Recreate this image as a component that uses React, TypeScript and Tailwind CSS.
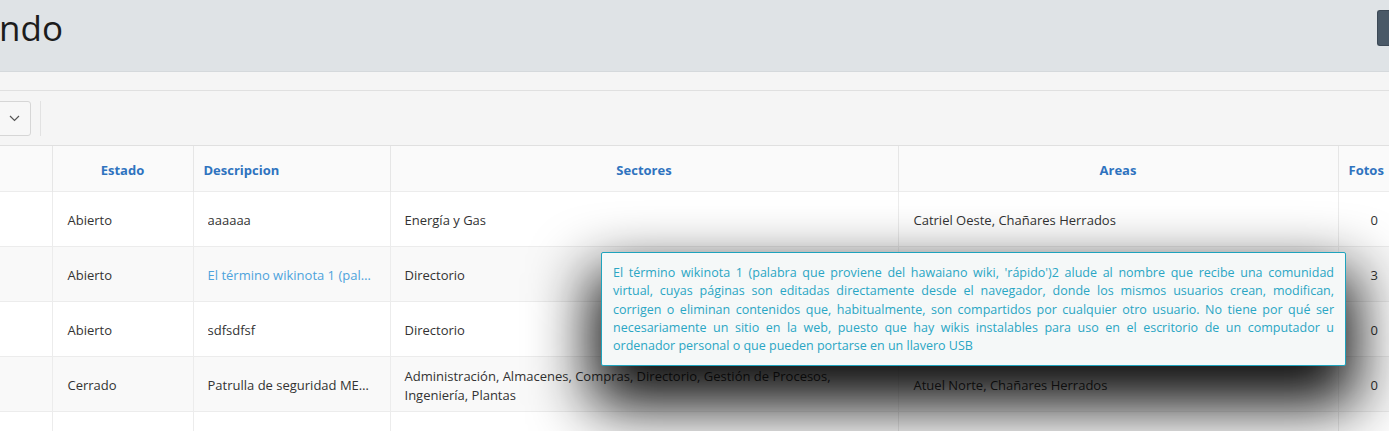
import React from "react";

type Row = {
  estado: string;
  descripcion: string;
  link?: boolean;
  sectores: string;
  areas: string;
  fotos: number;
};

const rows: Row[] = [
  { estado: "Abierto", descripcion: "aaaaaa", sectores: "Energía y Gas", areas: "Catriel Oeste, Chañares Herrados", fotos: 0 },
  {
    estado: "Abierto",
    descripcion: "El término wikinota 1 (palabra que proviene del hawaiano wiki)",
    link: true,
    sectores: "Directorio",
    areas: "Catriel Oeste",
    fotos: 3,
  },
  { estado: "Abierto", descripcion: "sdfsdfsf", sectores: "Directorio", areas: "Catriel Oeste", fotos: 0 },
  {
    estado: "Cerrado",
    descripcion: "Patrulla de seguridad MEDIO AMBIENTE",
    sectores: "Administración, Almacenes, Compras, Directorio, Gestión de Procesos, Ingeniería, Plantas",
    areas: "Atuel Norte, Chañares Herrados",
    fotos: 0,
  },
  { estado: "", descripcion: "", sectores: "", areas: "", fotos: -1 },
];

const tooltipText =
  "El término wikinota 1 (palabra que proviene del hawaiano wiki, 'rápido')2 alude al nombre que recibe una comunidad virtual, cuyas páginas son editadas directamente desde el navegador, donde los mismos usuarios crean, modifican, corrigen o eliminan contenidos que, habitualmente, son compartidos por cualquier otro usuario. No tiene por qué ser necesariamente un sitio en la web, puesto que hay wikis instalables para uso en el escritorio de un computador u ordenador personal o que pueden portarse en un llavero USB";

function Header() {
  return (
    <div className="h-[72px] bg-[#dfe3e6] border-b border-[#d5d9dc] flex items-start justify-between">
      <h1 className="text-[35px] leading-none text-[#1c1c1c] mt-[10px] ml-[-1px]">ndo</h1>
      <div className="mt-[10px] w-[12px] h-[36px] bg-[#4a5967] border border-[#3c4956] border-r-0 rounded-l-[3px]" />
    </div>
  );
}

function Toolbar() {
  return (
    <div className="bg-[#f5f5f5]">
      <div className="h-[19px] border-b border-[#e0e0e0]" />
      <div className="h-[55px] border-b border-[#e0e0e0] flex items-center">
        <div className="h-[35px] w-[32px] ml-[-1px] bg-[#f7f7f7] border border-[#d6d6d6] rounded-r-[3px] flex items-center justify-end pr-[10px]">
          <svg width="11" height="7" viewBox="0 0 11 7" fill="none">
            <path d="M1 1l4.5 4.5L10 1" stroke="#555" strokeWidth="1.2" />
          </svg>
        </div>
        <div className="ml-[9px] w-px h-[35px] bg-[#e2e2e2]" />
      </div>
    </div>
  );
}

function Table() {
  return (
    <table className="table-fixed border-collapse w-[1450px] text-[13px] text-[#333]">
      <colgroup>
        <col className="w-[52px]" />
        <col className="w-[141px]" />
        <col className="w-[197px]" />
        <col className="w-[508px]" />
        <col className="w-[440px]" />
        <col className="w-[112px]" />
      </colgroup>
      <thead>
        <tr className="h-[45px] bg-[#fafafa] text-[#2f73bf] font-bold">
          <th className="border-r border-[#e6e6e6]" />
          <th className="border-r border-[#e6e6e6] text-center pt-[4px]">Estado</th>
          <th className="border-r border-[#e6e6e6] text-left pl-[10px] pt-[4px]">Descripcion</th>
          <th className="border-r border-[#e6e6e6] text-center pt-[4px]">Sectores</th>
          <th className="border-r border-[#e6e6e6] text-center pt-[4px]">Areas</th>
          <th className="text-left pl-[10px] pt-[4px]">Fotos</th>
        </tr>
      </thead>
      <tbody>
        {rows.map((r, i) => (
          <tr key={i} className={`h-[55px] border-t border-[#ececec] ${i % 2 === 1 ? "bg-[#f9f9f9]" : "bg-white"}`}>
            <td className="border-r border-[#ececec]" />
            <td className="border-r border-[#ececec] pl-[15px] pt-[4px]">{r.estado}</td>
            <td className="border-r border-[#ececec] px-[14px] pt-[4px]">
              <div className={`truncate ${r.link ? "text-[#4ea3dc]" : ""}`}>{r.descripcion}</div>
            </td>
            <td className="border-r border-[#ececec] pl-[14px] pr-[46px] pt-[4px] leading-[19px]">{r.sectores}</td>
            <td className="border-r border-[#ececec] pl-[15px] pt-[4px]">{r.areas}</td>
            <td className="pr-[72px] pt-[4px] text-right">{r.fotos >= 0 ? r.fotos : ""}</td>
          </tr>
        ))}
      </tbody>
    </table>
  );
}

export default function App() {
  return (
    <div
      className="relative w-[1389px] h-[431px] overflow-hidden bg-white"
      style={{ fontFamily: "'Open Sans', 'Noto Sans', sans-serif" }}
    >
      <Header />
      <Toolbar />
      <Table />
      <div className="absolute left-[601px] top-[252px] w-[745px] h-[114px] bg-[#f5f8f8] border border-[#1ea3bd] rounded-[2px] px-[11px] pt-[11px] text-[12.5px] leading-[18.3px] text-[#2aa6c4] text-justify shadow-[0_30px_60px_10px_rgba(0,0,0,0.95)]">
        {tooltipText}
      </div>
    </div>
  );
}
